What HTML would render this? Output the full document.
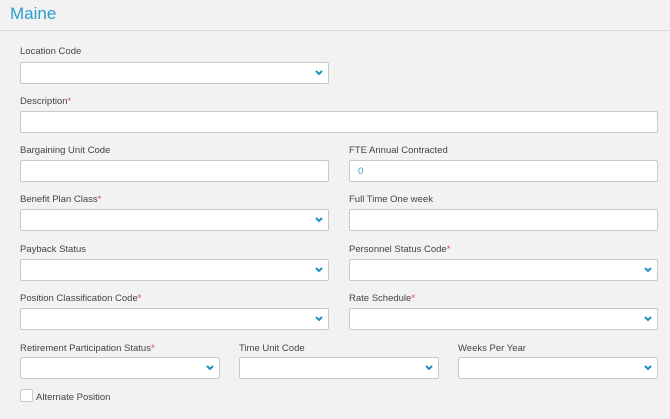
<!DOCTYPE html>
<html><head><style>
*{box-sizing:border-box;margin:0;padding:0}
body{width:670px;height:419px;background:#f2f2f2;font-family:"Liberation Sans",sans-serif;position:relative;overflow:hidden}
.t{position:absolute;left:10px;top:4px;font-size:17px;color:#2b9fcf}
.hr{position:absolute;left:0;top:30px;width:670px;height:1px;background:#dcdcdc}
.l{position:absolute;font-size:9.5px;color:#444}
.l b{color:#e04545;font-weight:normal}
.i{position:absolute;height:22px;background:#fff;border:1px solid #c8c8c8;border-radius:2px}
.i svg{position:absolute;right:5px;top:7px}
.v{position:absolute;left:8px;top:5px;font-size:9.5px;color:#2b9fcf}
</style></head><body>
<div class="t">Maine</div><div class="hr"></div>

<div class="l" style="left:20px;top:46px">Location Code</div>
<div class="i" style="left:20px;top:62px;width:309px"><svg width="8" height="6"><path d="M1 1L4 4L7 1" stroke="#1f8fc0" stroke-width="2" fill="none"/></svg></div>

<div class="l" style="left:20px;top:96px">Description<b>*</b></div>
<div class="i" style="left:20px;top:111px;width:638px"></div>

<div class="l" style="left:20px;top:145px">Bargaining Unit Code</div>
<div class="i" style="left:20px;top:160px;width:309px"></div>
<div class="l" style="left:349px;top:145px">FTE Annual Contracted</div>
<div class="i" style="left:349px;top:160px;width:309px"><span class="v">0</span></div>

<div class="l" style="left:20px;top:194px">Benefit Plan Class<b>*</b></div>
<div class="i" style="left:20px;top:209px;width:309px"><svg width="8" height="6"><path d="M1 1L4 4L7 1" stroke="#1f8fc0" stroke-width="2" fill="none"/></svg></div>
<div class="l" style="left:349px;top:194px">Full Time One week</div>
<div class="i" style="left:349px;top:209px;width:309px"></div>

<div class="l" style="left:20px;top:244px">Payback Status</div>
<div class="i" style="left:20px;top:259px;width:309px"><svg width="8" height="6"><path d="M1 1L4 4L7 1" stroke="#1f8fc0" stroke-width="2" fill="none"/></svg></div>
<div class="l" style="left:349px;top:244px">Personnel Status Code<b>*</b></div>
<div class="i" style="left:349px;top:259px;width:309px"><svg width="8" height="6"><path d="M1 1L4 4L7 1" stroke="#1f8fc0" stroke-width="2" fill="none"/></svg></div>

<div class="l" style="left:20px;top:293px">Position Classification Code<b>*</b></div>
<div class="i" style="left:20px;top:308px;width:309px"><svg width="8" height="6"><path d="M1 1L4 4L7 1" stroke="#1f8fc0" stroke-width="2" fill="none"/></svg></div>
<div class="l" style="left:349px;top:293px">Rate Schedule<b>*</b></div>
<div class="i" style="left:349px;top:308px;width:309px"><svg width="8" height="6"><path d="M1 1L4 4L7 1" stroke="#1f8fc0" stroke-width="2" fill="none"/></svg></div>

<div class="l" style="left:20px;top:343px">Retirement Participation Status<b>*</b></div>
<div class="i" style="left:20px;top:357px;width:200px"><svg width="8" height="6"><path d="M1 1L4 4L7 1" stroke="#1f8fc0" stroke-width="2" fill="none"/></svg></div>
<div class="l" style="left:239px;top:343px">Time Unit Code</div>
<div class="i" style="left:239px;top:357px;width:200px"><svg width="8" height="6"><path d="M1 1L4 4L7 1" stroke="#1f8fc0" stroke-width="2" fill="none"/></svg></div>
<div class="l" style="left:458px;top:343px">Weeks Per Year</div>
<div class="i" style="left:458px;top:357px;width:200px"><svg width="8" height="6"><path d="M1 1L4 4L7 1" stroke="#1f8fc0" stroke-width="2" fill="none"/></svg></div>

<div style="position:absolute;left:20px;top:389px;width:13px;height:13px;background:#fff;border:1px solid #c8c8c8;border-radius:2px"></div>
<div class="l" style="left:36px;top:392px">Alternate Position</div>
</body></html>
